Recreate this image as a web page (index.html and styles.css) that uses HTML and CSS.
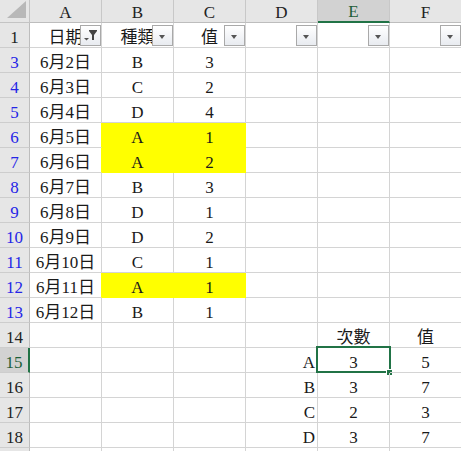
FILE: index.html
```html
<!DOCTYPE html>
<html>
<head>
<meta charset="utf-8">
<link rel="stylesheet" href="styles.css">
</head>
<body>
<div class="sheet">
  <div class="corner"><svg class="tri" width="19" height="17" viewBox="0 0 19 17"><polygon points="19,0 19,17 0,17" fill="#b8b8b8"/></svg></div>
  <div class="ch">A</div><div class="ch">B</div><div class="ch">C</div><div class="ch">D</div><div class="ch sel-col">E</div><div class="ch">F</div>

  <div class="rh">1</div>
  <div class="c">日期<span class="fb"><svg width="19" height="19" viewBox="0 0 19 19"><polygon points="3,12 8,12 5.5,14.5" fill="#555"/><polygon points="8,4 16,4 16,5 13,9 13,14 11,14 11,9 8,5" fill="#444"/></svg></span></div>
  <div class="c">種類<span class="fb"><i class="arr"></i></span></div>
  <div class="c">值<span class="fb"><i class="arr"></i></span></div>
  <div class="c"><span class="fb"><i class="arr"></i></span></div>
  <div class="c"><span class="fb"><i class="arr"></i></span></div>
  <div class="c"><span class="fb"><i class="arr"></i></span></div>

  <div class="rh blue">3</div><div class="c">6月2日</div><div class="c">B</div><div class="c">3</div><div class="c"></div><div class="c"></div><div class="c"></div>
  <div class="rh blue">4</div><div class="c">6月3日</div><div class="c">C</div><div class="c">2</div><div class="c"></div><div class="c"></div><div class="c"></div>
  <div class="rh blue">5</div><div class="c">6月4日</div><div class="c">D</div><div class="c">4</div><div class="c"></div><div class="c"></div><div class="c"></div>
  <div class="rh blue">6</div><div class="c yr">6月5日</div><div class="c y">A</div><div class="c y">1</div><div class="c"></div><div class="c"></div><div class="c"></div>
  <div class="rh blue">7</div><div class="c yr">6月6日</div><div class="c y">A</div><div class="c y">2</div><div class="c"></div><div class="c"></div><div class="c"></div>
  <div class="rh blue">8</div><div class="c">6月7日</div><div class="c">B</div><div class="c">3</div><div class="c"></div><div class="c"></div><div class="c"></div>
  <div class="rh blue">9</div><div class="c">6月8日</div><div class="c">D</div><div class="c">1</div><div class="c"></div><div class="c"></div><div class="c"></div>
  <div class="rh blue">10</div><div class="c">6月9日</div><div class="c">D</div><div class="c">2</div><div class="c"></div><div class="c"></div><div class="c"></div>
  <div class="rh blue">11</div><div class="c">6月10日</div><div class="c">C</div><div class="c">1</div><div class="c"></div><div class="c"></div><div class="c"></div>
  <div class="rh blue">12</div><div class="c yr">6月11日</div><div class="c y">A</div><div class="c y">1</div><div class="c"></div><div class="c"></div><div class="c"></div>
  <div class="rh blue">13</div><div class="c">6月12日</div><div class="c">B</div><div class="c">1</div><div class="c"></div><div class="c"></div><div class="c"></div>

  <div class="rh">14</div><div class="c"></div><div class="c"></div><div class="c"></div><div class="c"></div><div class="c">次數</div><div class="c">值</div>
  <div class="rh sel-row">15</div><div class="c"></div><div class="c"></div><div class="c"></div><div class="c r">A</div><div class="c active">3<span class="selbox"></span><span class="handle"></span></div><div class="c">5</div>
  <div class="rh">16</div><div class="c"></div><div class="c"></div><div class="c"></div><div class="c r">B</div><div class="c">3</div><div class="c">7</div>
  <div class="rh">17</div><div class="c"></div><div class="c"></div><div class="c"></div><div class="c r">C</div><div class="c">2</div><div class="c">3</div>
  <div class="rh">18</div><div class="c"></div><div class="c"></div><div class="c"></div><div class="c r">D</div><div class="c">3</div><div class="c">7</div>
  <div class="rh"></div><div class="c"></div><div class="c"></div><div class="c"></div><div class="c"></div><div class="c"></div><div class="c"></div>
</div>
</body>
</html>
```

FILE: styles.css
```css
html, body {
  margin: 0;
  padding: 0;
  background: #ffffff;
  overflow: hidden;
  width: 461px;
  height: 451px;
}

.sheet {
  display: grid;
  grid-template-columns: 30px repeat(6, 72px);
  grid-template-rows: 23px repeat(18, 25px);
  font-family: "Liberation Serif", "Noto Sans CJK TC", serif;
  font-size: 17px;
  color: #1a1a1a;
}

.sheet > div {
  box-sizing: border-box;
  display: flex;
  justify-content: center;
  align-items: flex-end;
  line-height: 18px;
  white-space: nowrap;
  position: relative;
}

.corner {
  background: #e6e6e6;
  border-right: 1px solid #c4c4c4;
  border-bottom: 1px solid #c4c4c4;
}

.corner .tri {
  position: absolute;
  right: 3px;
  bottom: 4px;
}

.ch {
  background: #e6e6e6;
  border-right: 1px solid #c8c8c8;
  border-bottom: 1px solid #bdbdbd;
  color: #222;
}

.ch.sel-col {
  background: #d2d2d2;
  border-bottom: 2px solid #217346;
  color: #1d5e38;
}

.rh {
  background: #e6e6e6;
  border-right: 1px solid #bdbdbd;
  border-bottom: 1px solid #cdcdcd;
  color: #222;
}

.rh.blue {
  color: #2525e6;
}

.rh.sel-row {
  background: #d2d2d2;
  border-right: 2px solid #217346;
  color: #1d5e38;
}

.c {
  border-right: 1px solid #d4d4d4;
  border-bottom: 1px solid #d4d4d4;
}

.c.r {
  justify-content: flex-end;
  padding-right: 2px;
}

.c.y {
  background: #ffff00;
  border-right-color: #ffff00;
  border-bottom-color: #ffff00;
}

.c.yr {
  border-right-color: #ffff00;
}

.fb {
  position: absolute;
  right: 0;
  top: 2px;
  width: 21px;
  height: 21px;
  box-sizing: border-box;
  border: 1px solid #a9a9a9;
  background: linear-gradient(#ffffff, #e8ebf0);
  display: flex;
  align-items: flex-start;
  justify-content: flex-start;
}

.fb .arr {
  display: block;
  margin: 9px 0 0 6px;
  width: 0;
  height: 0;
  border-left: 3.5px solid transparent;
  border-right: 3.5px solid transparent;
  border-top: 4px solid #555;
}

.fb svg {
  display: block;
}

.selbox {
  position: absolute;
  left: -2px;
  top: -2px;
  width: 75px;
  height: 27px;
  box-sizing: border-box;
  border: 2px solid #217346;
}

.handle {
  position: absolute;
  left: 68px;
  top: 21px;
  width: 7px;
  height: 7px;
  box-sizing: border-box;
  background: #217346;
  border: 1px solid #ffffff;
}
```
